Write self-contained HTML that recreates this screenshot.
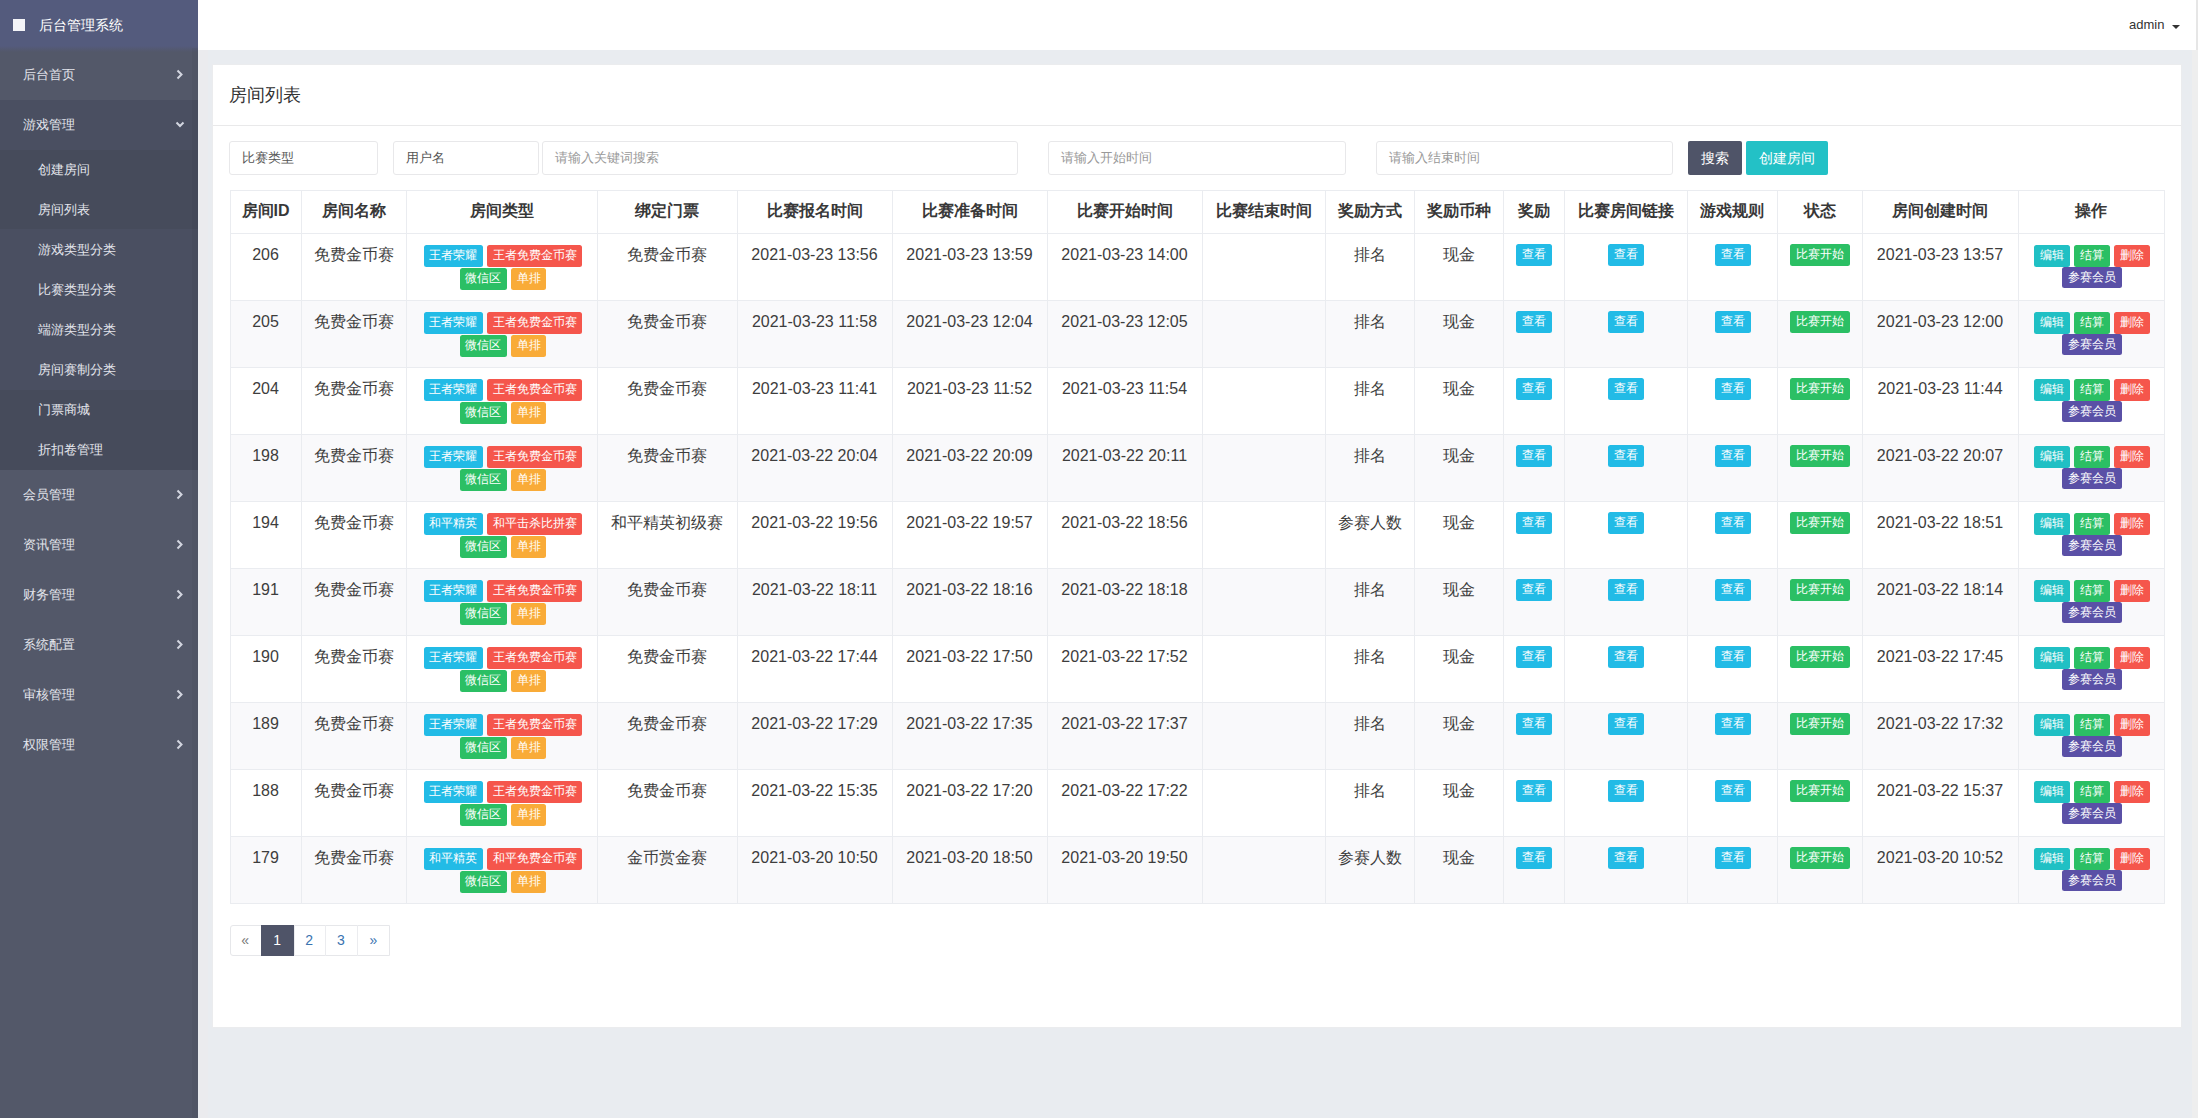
<!DOCTYPE html><html><head><meta charset="utf-8"><style>
*{margin:0;padding:0;box-sizing:border-box}
html,body{width:2198px;height:1118px;overflow:hidden;background:#e9ecf0;font-family:"Liberation Sans", sans-serif;position:relative}
.a{position:absolute}
.sb{left:0;top:0;width:198px;height:1118px;background:#535869}
.mi{left:0;width:198px;height:50px;color:#e3e5ec;font-size:13px;line-height:50px;padding-left:23px}
.si{left:0;width:198px;height:40px;color:#e3e5ec;font-size:13px;line-height:40px;padding-left:38px}
.chev{left:170px;width:20px;height:20px}
.hd{left:198px;top:0;width:1998px;height:50px;background:#fff}
.card{left:212px;top:64px;width:1970px;height:964px;background:#fff;border:1px solid #ebecee}
.inp{top:141px;height:34px;border:1px solid #e8e8ea;border-radius:3px;background:#fff;font-size:13px;line-height:32px;color:#555;padding-left:12px}
.ph{color:#999}
.btn{top:141px;height:34px;font-size:14px;line-height:34px;color:#fff;text-align:center;border-radius:2px}
.hl{height:1px;background:#eaecf0}
.vl{width:1px;background:#eaecf0}
.th{font-size:16px;font-weight:bold;color:#383838;text-align:center;line-height:20px}
.td{font-size:16px;color:#3d3d3d;text-align:center;line-height:20px}
.tg{display:inline-block;height:21.5px;line-height:21.5px;font-size:12px;font-weight:500;color:#fff;padding:0 5.6px;border-radius:2.5px;vertical-align:top}
.bl{background:#22bbe6} .rd{background:#f5564c} .gr{background:#2bbf64} .or{background:#f9ab38}
.b6{padding:0 6px} .tl{background:#20c0c4} .pu{background:#5a50a6}
</style></head><body>
<div class="a sb"></div>
<div class="a" style="left:0;top:0;width:198px;height:52px;background:linear-gradient(#545b7d 0,#545b7d 46px,#535869 52px)"></div>
<div class="a" style="left:13px;top:19px;width:12px;height:12px;background:#f4f4f8"></div>
<div class="a" style="left:39px;top:0;height:50px;line-height:50px;font-size:14px;color:#fff">后台管理系统</div>
<div class="a" style="left:0;top:100px;width:198px;height:50px;background:#4a4f61"></div>
<div class="a" style="left:0;top:150px;width:198px;height:79px;background:#464b5b"></div>
<div class="a" style="left:0;top:229px;width:198px;height:161px;background:#4a4f61"></div>
<div class="a" style="left:0;top:390px;width:198px;height:80px;background:#464b5b"></div>
<div class="a mi" style="top:50px">后台首页</div>
<svg class="a chev" style="top:65px" viewBox="0 0 20 20"><polyline points="7.5,5.5 11.5,9.5 7.5,13.5" fill="none" stroke="#d3d6e0" stroke-width="2"/></svg>
<div class="a mi" style="top:100px">游戏管理</div>
<svg class="a chev" style="top:115px" viewBox="0 0 20 20"><polyline points="6.5,7.5 10,11 13.5,7.5" fill="none" stroke="#d3d6e0" stroke-width="2"/></svg>
<div class="a si" style="top:150px">创建房间</div>
<div class="a si" style="top:190px">房间列表</div>
<div class="a si" style="top:230px">游戏类型分类</div>
<div class="a si" style="top:270px">比赛类型分类</div>
<div class="a si" style="top:310px">端游类型分类</div>
<div class="a si" style="top:350px">房间赛制分类</div>
<div class="a si" style="top:390px">门票商城</div>
<div class="a si" style="top:430px">折扣卷管理</div>
<div class="a mi" style="top:470px">会员管理</div>
<svg class="a chev" style="top:485px" viewBox="0 0 20 20"><polyline points="7.5,5.5 11.5,9.5 7.5,13.5" fill="none" stroke="#d3d6e0" stroke-width="2"/></svg>
<div class="a mi" style="top:520px">资讯管理</div>
<svg class="a chev" style="top:535px" viewBox="0 0 20 20"><polyline points="7.5,5.5 11.5,9.5 7.5,13.5" fill="none" stroke="#d3d6e0" stroke-width="2"/></svg>
<div class="a mi" style="top:570px">财务管理</div>
<svg class="a chev" style="top:585px" viewBox="0 0 20 20"><polyline points="7.5,5.5 11.5,9.5 7.5,13.5" fill="none" stroke="#d3d6e0" stroke-width="2"/></svg>
<div class="a mi" style="top:620px">系统配置</div>
<svg class="a chev" style="top:635px" viewBox="0 0 20 20"><polyline points="7.5,5.5 11.5,9.5 7.5,13.5" fill="none" stroke="#d3d6e0" stroke-width="2"/></svg>
<div class="a mi" style="top:670px">审核管理</div>
<svg class="a chev" style="top:685px" viewBox="0 0 20 20"><polyline points="7.5,5.5 11.5,9.5 7.5,13.5" fill="none" stroke="#d3d6e0" stroke-width="2"/></svg>
<div class="a mi" style="top:720px">权限管理</div>
<svg class="a chev" style="top:735px" viewBox="0 0 20 20"><polyline points="7.5,5.5 11.5,9.5 7.5,13.5" fill="none" stroke="#d3d6e0" stroke-width="2"/></svg>
<div class="a hd"></div>
<div class="a" style="left:199px;top:50px;width:9px;height:1068px;background:#ebebee"></div>
<div class="a" style="left:192px;top:48px;width:6px;height:1070px;background:#000;opacity:0.03"></div>
<div class="a" style="left:2196px;top:0;width:2px;height:50px;background:#e6e6e6"></div>
<div class="a" style="left:2192px;top:50px;width:6px;height:1068px;background:#eeeeee"></div>
<div class="a" style="left:2129px;top:16px;font-size:13px;line-height:18px;color:#333">admin</div>
<div class="a" style="left:2172px;top:24.5px;width:0;height:0;border-left:4.5px solid transparent;border-right:4.5px solid transparent;border-top:4.5px solid #333"></div>
<div class="a card"></div>
<div class="a" style="left:229px;top:83px;font-size:18px;line-height:24px;color:#333">房间列表</div>
<div class="a hl" style="left:213px;top:125px;width:1968px;background:#e9e9ea"></div>
<div class="a inp" style="left:229px;width:149px">比赛类型</div>
<div class="a inp" style="left:393px;width:146px">用户名</div>
<div class="a inp ph" style="left:542px;width:476px">请输入关键词搜索</div>
<div class="a inp ph" style="left:1048px;width:298px">请输入开始时间</div>
<div class="a inp ph" style="left:1376px;width:297px">请输入结束时间</div>
<div class="a btn" style="left:1688px;width:54px;background:#4f5468">搜索</div>
<div class="a btn" style="left:1746px;width:82px;background:#23c1c6">创建房间</div>
<div class="a" style="left:230px;top:300px;width:1934px;height:67px;background:#f9f9fb"></div>
<div class="a" style="left:230px;top:434px;width:1934px;height:67px;background:#f9f9fb"></div>
<div class="a" style="left:230px;top:568px;width:1934px;height:67px;background:#f9f9fb"></div>
<div class="a" style="left:230px;top:702px;width:1934px;height:67px;background:#f9f9fb"></div>
<div class="a" style="left:230px;top:836px;width:1934px;height:67px;background:#f9f9fb"></div>
<div class="a hl" style="left:230px;top:190px;width:1935px"></div>
<div class="a hl" style="left:230px;top:233px;width:1935px"></div>
<div class="a hl" style="left:230px;top:300px;width:1935px"></div>
<div class="a hl" style="left:230px;top:367px;width:1935px"></div>
<div class="a hl" style="left:230px;top:434px;width:1935px"></div>
<div class="a hl" style="left:230px;top:501px;width:1935px"></div>
<div class="a hl" style="left:230px;top:568px;width:1935px"></div>
<div class="a hl" style="left:230px;top:635px;width:1935px"></div>
<div class="a hl" style="left:230px;top:702px;width:1935px"></div>
<div class="a hl" style="left:230px;top:769px;width:1935px"></div>
<div class="a hl" style="left:230px;top:836px;width:1935px"></div>
<div class="a hl" style="left:230px;top:903px;width:1935px"></div>
<div class="a vl" style="left:230px;top:190px;height:713px"></div>
<div class="a vl" style="left:301px;top:190px;height:713px"></div>
<div class="a vl" style="left:406px;top:190px;height:713px"></div>
<div class="a vl" style="left:597px;top:190px;height:713px"></div>
<div class="a vl" style="left:737px;top:190px;height:713px"></div>
<div class="a vl" style="left:892px;top:190px;height:713px"></div>
<div class="a vl" style="left:1047px;top:190px;height:713px"></div>
<div class="a vl" style="left:1202px;top:190px;height:713px"></div>
<div class="a vl" style="left:1325px;top:190px;height:713px"></div>
<div class="a vl" style="left:1414px;top:190px;height:713px"></div>
<div class="a vl" style="left:1503px;top:190px;height:713px"></div>
<div class="a vl" style="left:1564px;top:190px;height:713px"></div>
<div class="a vl" style="left:1687px;top:190px;height:713px"></div>
<div class="a vl" style="left:1777px;top:190px;height:713px"></div>
<div class="a vl" style="left:1862px;top:190px;height:713px"></div>
<div class="a vl" style="left:2018px;top:190px;height:713px"></div>
<div class="a vl" style="left:2164px;top:190px;height:713px"></div>
<div class="a th" style="left:230px;width:71px;top:201px">房间ID</div>
<div class="a th" style="left:301px;width:105px;top:201px">房间名称</div>
<div class="a th" style="left:406px;width:191px;top:201px">房间类型</div>
<div class="a th" style="left:597px;width:140px;top:201px">绑定门票</div>
<div class="a th" style="left:737px;width:155px;top:201px">比赛报名时间</div>
<div class="a th" style="left:892px;width:155px;top:201px">比赛准备时间</div>
<div class="a th" style="left:1047px;width:155px;top:201px">比赛开始时间</div>
<div class="a th" style="left:1202px;width:123px;top:201px">比赛结束时间</div>
<div class="a th" style="left:1325px;width:89px;top:201px">奖励方式</div>
<div class="a th" style="left:1414px;width:89px;top:201px">奖励币种</div>
<div class="a th" style="left:1503px;width:61px;top:201px">奖励</div>
<div class="a th" style="left:1564px;width:123px;top:201px">比赛房间链接</div>
<div class="a th" style="left:1687px;width:90px;top:201px">游戏规则</div>
<div class="a th" style="left:1777px;width:85px;top:201px">状态</div>
<div class="a th" style="left:1862px;width:156px;top:201px">房间创建时间</div>
<div class="a th" style="left:2018px;width:146px;top:201px">操作</div>
<div class="a td" style="left:230px;width:71px;top:245px">206</div>
<div class="a td" style="left:301px;width:105px;top:245px">免费金币赛</div>
<div class="a" style="left:407.5px;width:191px;top:245px;text-align:center;font-size:16px;line-height:21px;height:21px"><span class="tg bl">王者荣耀</span> <span class="tg rd">王者免费金币赛</span></div>
<div class="a" style="left:407.5px;width:191px;top:268px;text-align:center;font-size:16px;line-height:21px;height:21px"><span class="tg gr">微信区</span> <span class="tg or">单排</span></div>
<div class="a td" style="left:597px;width:140px;top:245px">免费金币赛</div>
<div class="a td" style="left:737px;width:155px;top:245px">2021-03-23 13:56</div>
<div class="a td" style="left:892px;width:155px;top:245px">2021-03-23 13:59</div>
<div class="a td" style="left:1047px;width:155px;top:245px">2021-03-23 14:00</div>
<div class="a td" style="left:1325px;width:89px;top:245px">排名</div>
<div class="a td" style="left:1414px;width:89px;top:245px">现金</div>
<div class="a td" style="left:1503px;width:61px;top:244px"><span class="tg b6 bl">查看</span></div>
<div class="a td" style="left:1564px;width:123px;top:244px"><span class="tg b6 bl">查看</span></div>
<div class="a td" style="left:1688px;width:90px;top:244px"><span class="tg b6 bl">查看</span></div>
<div class="a td" style="left:1777px;width:85px;top:244px"><span class="tg b6 gr">比赛开始</span></div>
<div class="a td" style="left:1862px;width:156px;top:245px">2021-03-23 13:57</div>
<div class="a" style="left:2019px;width:146px;top:245px;text-align:center;font-size:16px;line-height:21px;height:21px"><span class="tg b6 tl">编辑</span> <span class="tg b6 gr">结算</span> <span class="tg b6 rd">删除</span></div>
<div class="a" style="left:2019px;width:146px;top:266.6px;text-align:center;font-size:16px;line-height:21px;height:21px"><span class="tg b6 pu">参赛会员</span></div>
<div class="a td" style="left:230px;width:71px;top:312px">205</div>
<div class="a td" style="left:301px;width:105px;top:312px">免费金币赛</div>
<div class="a" style="left:407.5px;width:191px;top:312px;text-align:center;font-size:16px;line-height:21px;height:21px"><span class="tg bl">王者荣耀</span> <span class="tg rd">王者免费金币赛</span></div>
<div class="a" style="left:407.5px;width:191px;top:335px;text-align:center;font-size:16px;line-height:21px;height:21px"><span class="tg gr">微信区</span> <span class="tg or">单排</span></div>
<div class="a td" style="left:597px;width:140px;top:312px">免费金币赛</div>
<div class="a td" style="left:737px;width:155px;top:312px">2021-03-23 11:58</div>
<div class="a td" style="left:892px;width:155px;top:312px">2021-03-23 12:04</div>
<div class="a td" style="left:1047px;width:155px;top:312px">2021-03-23 12:05</div>
<div class="a td" style="left:1325px;width:89px;top:312px">排名</div>
<div class="a td" style="left:1414px;width:89px;top:312px">现金</div>
<div class="a td" style="left:1503px;width:61px;top:311px"><span class="tg b6 bl">查看</span></div>
<div class="a td" style="left:1564px;width:123px;top:311px"><span class="tg b6 bl">查看</span></div>
<div class="a td" style="left:1688px;width:90px;top:311px"><span class="tg b6 bl">查看</span></div>
<div class="a td" style="left:1777px;width:85px;top:311px"><span class="tg b6 gr">比赛开始</span></div>
<div class="a td" style="left:1862px;width:156px;top:312px">2021-03-23 12:00</div>
<div class="a" style="left:2019px;width:146px;top:312px;text-align:center;font-size:16px;line-height:21px;height:21px"><span class="tg b6 tl">编辑</span> <span class="tg b6 gr">结算</span> <span class="tg b6 rd">删除</span></div>
<div class="a" style="left:2019px;width:146px;top:333.6px;text-align:center;font-size:16px;line-height:21px;height:21px"><span class="tg b6 pu">参赛会员</span></div>
<div class="a td" style="left:230px;width:71px;top:379px">204</div>
<div class="a td" style="left:301px;width:105px;top:379px">免费金币赛</div>
<div class="a" style="left:407.5px;width:191px;top:379px;text-align:center;font-size:16px;line-height:21px;height:21px"><span class="tg bl">王者荣耀</span> <span class="tg rd">王者免费金币赛</span></div>
<div class="a" style="left:407.5px;width:191px;top:402px;text-align:center;font-size:16px;line-height:21px;height:21px"><span class="tg gr">微信区</span> <span class="tg or">单排</span></div>
<div class="a td" style="left:597px;width:140px;top:379px">免费金币赛</div>
<div class="a td" style="left:737px;width:155px;top:379px">2021-03-23 11:41</div>
<div class="a td" style="left:892px;width:155px;top:379px">2021-03-23 11:52</div>
<div class="a td" style="left:1047px;width:155px;top:379px">2021-03-23 11:54</div>
<div class="a td" style="left:1325px;width:89px;top:379px">排名</div>
<div class="a td" style="left:1414px;width:89px;top:379px">现金</div>
<div class="a td" style="left:1503px;width:61px;top:378px"><span class="tg b6 bl">查看</span></div>
<div class="a td" style="left:1564px;width:123px;top:378px"><span class="tg b6 bl">查看</span></div>
<div class="a td" style="left:1688px;width:90px;top:378px"><span class="tg b6 bl">查看</span></div>
<div class="a td" style="left:1777px;width:85px;top:378px"><span class="tg b6 gr">比赛开始</span></div>
<div class="a td" style="left:1862px;width:156px;top:379px">2021-03-23 11:44</div>
<div class="a" style="left:2019px;width:146px;top:379px;text-align:center;font-size:16px;line-height:21px;height:21px"><span class="tg b6 tl">编辑</span> <span class="tg b6 gr">结算</span> <span class="tg b6 rd">删除</span></div>
<div class="a" style="left:2019px;width:146px;top:400.6px;text-align:center;font-size:16px;line-height:21px;height:21px"><span class="tg b6 pu">参赛会员</span></div>
<div class="a td" style="left:230px;width:71px;top:446px">198</div>
<div class="a td" style="left:301px;width:105px;top:446px">免费金币赛</div>
<div class="a" style="left:407.5px;width:191px;top:446px;text-align:center;font-size:16px;line-height:21px;height:21px"><span class="tg bl">王者荣耀</span> <span class="tg rd">王者免费金币赛</span></div>
<div class="a" style="left:407.5px;width:191px;top:469px;text-align:center;font-size:16px;line-height:21px;height:21px"><span class="tg gr">微信区</span> <span class="tg or">单排</span></div>
<div class="a td" style="left:597px;width:140px;top:446px">免费金币赛</div>
<div class="a td" style="left:737px;width:155px;top:446px">2021-03-22 20:04</div>
<div class="a td" style="left:892px;width:155px;top:446px">2021-03-22 20:09</div>
<div class="a td" style="left:1047px;width:155px;top:446px">2021-03-22 20:11</div>
<div class="a td" style="left:1325px;width:89px;top:446px">排名</div>
<div class="a td" style="left:1414px;width:89px;top:446px">现金</div>
<div class="a td" style="left:1503px;width:61px;top:445px"><span class="tg b6 bl">查看</span></div>
<div class="a td" style="left:1564px;width:123px;top:445px"><span class="tg b6 bl">查看</span></div>
<div class="a td" style="left:1688px;width:90px;top:445px"><span class="tg b6 bl">查看</span></div>
<div class="a td" style="left:1777px;width:85px;top:445px"><span class="tg b6 gr">比赛开始</span></div>
<div class="a td" style="left:1862px;width:156px;top:446px">2021-03-22 20:07</div>
<div class="a" style="left:2019px;width:146px;top:446px;text-align:center;font-size:16px;line-height:21px;height:21px"><span class="tg b6 tl">编辑</span> <span class="tg b6 gr">结算</span> <span class="tg b6 rd">删除</span></div>
<div class="a" style="left:2019px;width:146px;top:467.6px;text-align:center;font-size:16px;line-height:21px;height:21px"><span class="tg b6 pu">参赛会员</span></div>
<div class="a td" style="left:230px;width:71px;top:513px">194</div>
<div class="a td" style="left:301px;width:105px;top:513px">免费金币赛</div>
<div class="a" style="left:407.5px;width:191px;top:513px;text-align:center;font-size:16px;line-height:21px;height:21px"><span class="tg bl">和平精英</span> <span class="tg rd">和平击杀比拼赛</span></div>
<div class="a" style="left:407.5px;width:191px;top:536px;text-align:center;font-size:16px;line-height:21px;height:21px"><span class="tg gr">微信区</span> <span class="tg or">单排</span></div>
<div class="a td" style="left:597px;width:140px;top:513px">和平精英初级赛</div>
<div class="a td" style="left:737px;width:155px;top:513px">2021-03-22 19:56</div>
<div class="a td" style="left:892px;width:155px;top:513px">2021-03-22 19:57</div>
<div class="a td" style="left:1047px;width:155px;top:513px">2021-03-22 18:56</div>
<div class="a td" style="left:1325px;width:89px;top:513px">参赛人数</div>
<div class="a td" style="left:1414px;width:89px;top:513px">现金</div>
<div class="a td" style="left:1503px;width:61px;top:512px"><span class="tg b6 bl">查看</span></div>
<div class="a td" style="left:1564px;width:123px;top:512px"><span class="tg b6 bl">查看</span></div>
<div class="a td" style="left:1688px;width:90px;top:512px"><span class="tg b6 bl">查看</span></div>
<div class="a td" style="left:1777px;width:85px;top:512px"><span class="tg b6 gr">比赛开始</span></div>
<div class="a td" style="left:1862px;width:156px;top:513px">2021-03-22 18:51</div>
<div class="a" style="left:2019px;width:146px;top:513px;text-align:center;font-size:16px;line-height:21px;height:21px"><span class="tg b6 tl">编辑</span> <span class="tg b6 gr">结算</span> <span class="tg b6 rd">删除</span></div>
<div class="a" style="left:2019px;width:146px;top:534.6px;text-align:center;font-size:16px;line-height:21px;height:21px"><span class="tg b6 pu">参赛会员</span></div>
<div class="a td" style="left:230px;width:71px;top:580px">191</div>
<div class="a td" style="left:301px;width:105px;top:580px">免费金币赛</div>
<div class="a" style="left:407.5px;width:191px;top:580px;text-align:center;font-size:16px;line-height:21px;height:21px"><span class="tg bl">王者荣耀</span> <span class="tg rd">王者免费金币赛</span></div>
<div class="a" style="left:407.5px;width:191px;top:603px;text-align:center;font-size:16px;line-height:21px;height:21px"><span class="tg gr">微信区</span> <span class="tg or">单排</span></div>
<div class="a td" style="left:597px;width:140px;top:580px">免费金币赛</div>
<div class="a td" style="left:737px;width:155px;top:580px">2021-03-22 18:11</div>
<div class="a td" style="left:892px;width:155px;top:580px">2021-03-22 18:16</div>
<div class="a td" style="left:1047px;width:155px;top:580px">2021-03-22 18:18</div>
<div class="a td" style="left:1325px;width:89px;top:580px">排名</div>
<div class="a td" style="left:1414px;width:89px;top:580px">现金</div>
<div class="a td" style="left:1503px;width:61px;top:579px"><span class="tg b6 bl">查看</span></div>
<div class="a td" style="left:1564px;width:123px;top:579px"><span class="tg b6 bl">查看</span></div>
<div class="a td" style="left:1688px;width:90px;top:579px"><span class="tg b6 bl">查看</span></div>
<div class="a td" style="left:1777px;width:85px;top:579px"><span class="tg b6 gr">比赛开始</span></div>
<div class="a td" style="left:1862px;width:156px;top:580px">2021-03-22 18:14</div>
<div class="a" style="left:2019px;width:146px;top:580px;text-align:center;font-size:16px;line-height:21px;height:21px"><span class="tg b6 tl">编辑</span> <span class="tg b6 gr">结算</span> <span class="tg b6 rd">删除</span></div>
<div class="a" style="left:2019px;width:146px;top:601.6px;text-align:center;font-size:16px;line-height:21px;height:21px"><span class="tg b6 pu">参赛会员</span></div>
<div class="a td" style="left:230px;width:71px;top:647px">190</div>
<div class="a td" style="left:301px;width:105px;top:647px">免费金币赛</div>
<div class="a" style="left:407.5px;width:191px;top:647px;text-align:center;font-size:16px;line-height:21px;height:21px"><span class="tg bl">王者荣耀</span> <span class="tg rd">王者免费金币赛</span></div>
<div class="a" style="left:407.5px;width:191px;top:670px;text-align:center;font-size:16px;line-height:21px;height:21px"><span class="tg gr">微信区</span> <span class="tg or">单排</span></div>
<div class="a td" style="left:597px;width:140px;top:647px">免费金币赛</div>
<div class="a td" style="left:737px;width:155px;top:647px">2021-03-22 17:44</div>
<div class="a td" style="left:892px;width:155px;top:647px">2021-03-22 17:50</div>
<div class="a td" style="left:1047px;width:155px;top:647px">2021-03-22 17:52</div>
<div class="a td" style="left:1325px;width:89px;top:647px">排名</div>
<div class="a td" style="left:1414px;width:89px;top:647px">现金</div>
<div class="a td" style="left:1503px;width:61px;top:646px"><span class="tg b6 bl">查看</span></div>
<div class="a td" style="left:1564px;width:123px;top:646px"><span class="tg b6 bl">查看</span></div>
<div class="a td" style="left:1688px;width:90px;top:646px"><span class="tg b6 bl">查看</span></div>
<div class="a td" style="left:1777px;width:85px;top:646px"><span class="tg b6 gr">比赛开始</span></div>
<div class="a td" style="left:1862px;width:156px;top:647px">2021-03-22 17:45</div>
<div class="a" style="left:2019px;width:146px;top:647px;text-align:center;font-size:16px;line-height:21px;height:21px"><span class="tg b6 tl">编辑</span> <span class="tg b6 gr">结算</span> <span class="tg b6 rd">删除</span></div>
<div class="a" style="left:2019px;width:146px;top:668.6px;text-align:center;font-size:16px;line-height:21px;height:21px"><span class="tg b6 pu">参赛会员</span></div>
<div class="a td" style="left:230px;width:71px;top:714px">189</div>
<div class="a td" style="left:301px;width:105px;top:714px">免费金币赛</div>
<div class="a" style="left:407.5px;width:191px;top:714px;text-align:center;font-size:16px;line-height:21px;height:21px"><span class="tg bl">王者荣耀</span> <span class="tg rd">王者免费金币赛</span></div>
<div class="a" style="left:407.5px;width:191px;top:737px;text-align:center;font-size:16px;line-height:21px;height:21px"><span class="tg gr">微信区</span> <span class="tg or">单排</span></div>
<div class="a td" style="left:597px;width:140px;top:714px">免费金币赛</div>
<div class="a td" style="left:737px;width:155px;top:714px">2021-03-22 17:29</div>
<div class="a td" style="left:892px;width:155px;top:714px">2021-03-22 17:35</div>
<div class="a td" style="left:1047px;width:155px;top:714px">2021-03-22 17:37</div>
<div class="a td" style="left:1325px;width:89px;top:714px">排名</div>
<div class="a td" style="left:1414px;width:89px;top:714px">现金</div>
<div class="a td" style="left:1503px;width:61px;top:713px"><span class="tg b6 bl">查看</span></div>
<div class="a td" style="left:1564px;width:123px;top:713px"><span class="tg b6 bl">查看</span></div>
<div class="a td" style="left:1688px;width:90px;top:713px"><span class="tg b6 bl">查看</span></div>
<div class="a td" style="left:1777px;width:85px;top:713px"><span class="tg b6 gr">比赛开始</span></div>
<div class="a td" style="left:1862px;width:156px;top:714px">2021-03-22 17:32</div>
<div class="a" style="left:2019px;width:146px;top:714px;text-align:center;font-size:16px;line-height:21px;height:21px"><span class="tg b6 tl">编辑</span> <span class="tg b6 gr">结算</span> <span class="tg b6 rd">删除</span></div>
<div class="a" style="left:2019px;width:146px;top:735.6px;text-align:center;font-size:16px;line-height:21px;height:21px"><span class="tg b6 pu">参赛会员</span></div>
<div class="a td" style="left:230px;width:71px;top:781px">188</div>
<div class="a td" style="left:301px;width:105px;top:781px">免费金币赛</div>
<div class="a" style="left:407.5px;width:191px;top:781px;text-align:center;font-size:16px;line-height:21px;height:21px"><span class="tg bl">王者荣耀</span> <span class="tg rd">王者免费金币赛</span></div>
<div class="a" style="left:407.5px;width:191px;top:804px;text-align:center;font-size:16px;line-height:21px;height:21px"><span class="tg gr">微信区</span> <span class="tg or">单排</span></div>
<div class="a td" style="left:597px;width:140px;top:781px">免费金币赛</div>
<div class="a td" style="left:737px;width:155px;top:781px">2021-03-22 15:35</div>
<div class="a td" style="left:892px;width:155px;top:781px">2021-03-22 17:20</div>
<div class="a td" style="left:1047px;width:155px;top:781px">2021-03-22 17:22</div>
<div class="a td" style="left:1325px;width:89px;top:781px">排名</div>
<div class="a td" style="left:1414px;width:89px;top:781px">现金</div>
<div class="a td" style="left:1503px;width:61px;top:780px"><span class="tg b6 bl">查看</span></div>
<div class="a td" style="left:1564px;width:123px;top:780px"><span class="tg b6 bl">查看</span></div>
<div class="a td" style="left:1688px;width:90px;top:780px"><span class="tg b6 bl">查看</span></div>
<div class="a td" style="left:1777px;width:85px;top:780px"><span class="tg b6 gr">比赛开始</span></div>
<div class="a td" style="left:1862px;width:156px;top:781px">2021-03-22 15:37</div>
<div class="a" style="left:2019px;width:146px;top:781px;text-align:center;font-size:16px;line-height:21px;height:21px"><span class="tg b6 tl">编辑</span> <span class="tg b6 gr">结算</span> <span class="tg b6 rd">删除</span></div>
<div class="a" style="left:2019px;width:146px;top:802.6px;text-align:center;font-size:16px;line-height:21px;height:21px"><span class="tg b6 pu">参赛会员</span></div>
<div class="a td" style="left:230px;width:71px;top:848px">179</div>
<div class="a td" style="left:301px;width:105px;top:848px">免费金币赛</div>
<div class="a" style="left:407.5px;width:191px;top:848px;text-align:center;font-size:16px;line-height:21px;height:21px"><span class="tg bl">和平精英</span> <span class="tg rd">和平免费金币赛</span></div>
<div class="a" style="left:407.5px;width:191px;top:871px;text-align:center;font-size:16px;line-height:21px;height:21px"><span class="tg gr">微信区</span> <span class="tg or">单排</span></div>
<div class="a td" style="left:597px;width:140px;top:848px">金币赏金赛</div>
<div class="a td" style="left:737px;width:155px;top:848px">2021-03-20 10:50</div>
<div class="a td" style="left:892px;width:155px;top:848px">2021-03-20 18:50</div>
<div class="a td" style="left:1047px;width:155px;top:848px">2021-03-20 19:50</div>
<div class="a td" style="left:1325px;width:89px;top:848px">参赛人数</div>
<div class="a td" style="left:1414px;width:89px;top:848px">现金</div>
<div class="a td" style="left:1503px;width:61px;top:847px"><span class="tg b6 bl">查看</span></div>
<div class="a td" style="left:1564px;width:123px;top:847px"><span class="tg b6 bl">查看</span></div>
<div class="a td" style="left:1688px;width:90px;top:847px"><span class="tg b6 bl">查看</span></div>
<div class="a td" style="left:1777px;width:85px;top:847px"><span class="tg b6 gr">比赛开始</span></div>
<div class="a td" style="left:1862px;width:156px;top:848px">2021-03-20 10:52</div>
<div class="a" style="left:2019px;width:146px;top:848px;text-align:center;font-size:16px;line-height:21px;height:21px"><span class="tg b6 tl">编辑</span> <span class="tg b6 gr">结算</span> <span class="tg b6 rd">删除</span></div>
<div class="a" style="left:2019px;width:146px;top:869.6px;text-align:center;font-size:16px;line-height:21px;height:21px"><span class="tg b6 pu">参赛会员</span></div>
<div class="a" style="left:229.5px;top:924.5px;width:160.5px;height:31px;border:1px solid #e6e7ea;border-radius:3px 0 0 3px;background:#fff"></div>
<div class="a vl" style="left:261px;top:924.5px;height:31px;background:#ebecef"></div>
<div class="a vl" style="left:293.5px;top:924.5px;height:31px;background:#ebecef"></div>
<div class="a vl" style="left:325px;top:924.5px;height:31px;background:#ebecef"></div>
<div class="a vl" style="left:357px;top:924.5px;height:31px;background:#ebecef"></div>
<div class="a" style="left:261px;top:924.5px;width:32.5px;height:31px;background:#4f5468"></div>
<div class="a" style="left:229.5px;width:31.5px;top:924.5px;height:31px;line-height:31px;text-align:center;font-size:14px;color:#777">«</div>
<div class="a" style="left:261px;width:32.5px;top:924.5px;height:31px;line-height:31px;text-align:center;font-size:14px;color:#fff">1</div>
<div class="a" style="left:293.5px;width:31.5px;top:924.5px;height:31px;line-height:31px;text-align:center;font-size:14px;color:#3a74b0">2</div>
<div class="a" style="left:325px;width:32px;top:924.5px;height:31px;line-height:31px;text-align:center;font-size:14px;color:#3a74b0">3</div>
<div class="a" style="left:357px;width:33px;top:924.5px;height:31px;line-height:31px;text-align:center;font-size:14px;color:#3a74b0">»</div>
</body></html>
